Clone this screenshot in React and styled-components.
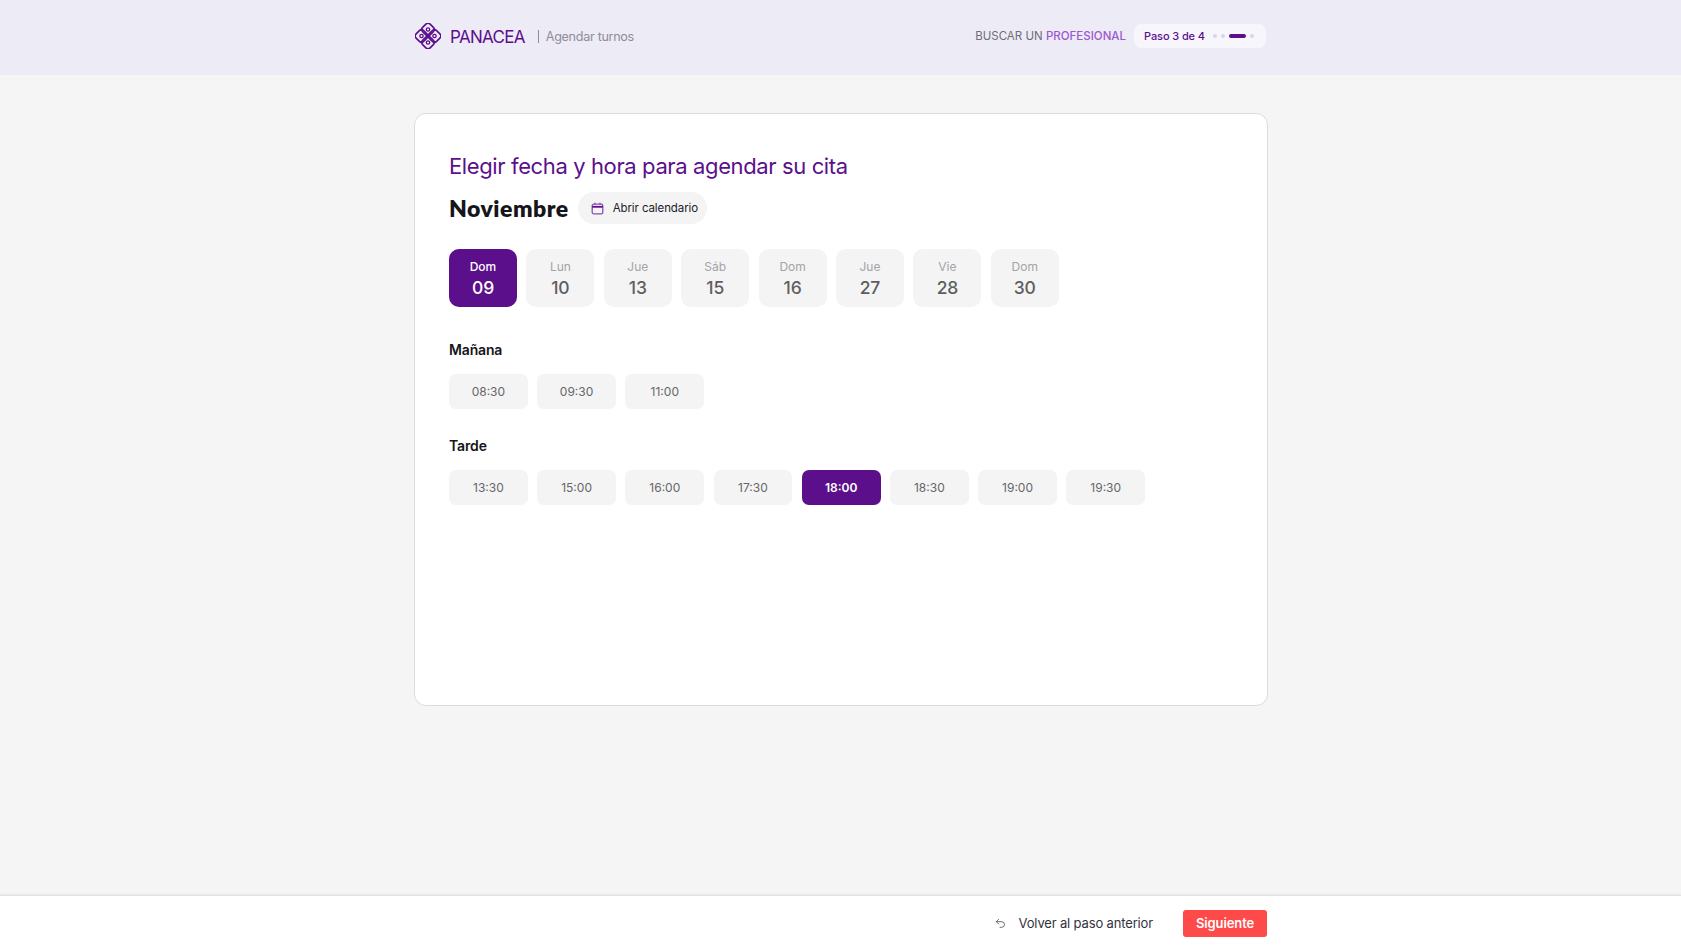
import React from "react";
import styled, { createGlobalStyle } from "styled-components";

const GlobalStyle = createGlobalStyle`
  html, body { margin: 0; padding: 0; }
  body { font-family: Inter, "Liberation Sans", sans-serif; background: #f5f5f5; }
  * { box-sizing: border-box; }
`;

const PURPLE = "#5c0f8b";

const Page = styled.div`
  display: flex;
  flex-direction: column;
  height: 949px;
  overflow: hidden;
`;

const Header = styled.header`
  height: 75px;
  background: #edebf6;
  display: flex;
  justify-content: center;
  flex-shrink: 0;
`;

const HeaderInner = styled.div`
  width: 853px;
  padding: 0 1px 3px;
  display: flex;
  align-items: center;
  justify-content: space-between;
`;

const Brand = styled.div`
  display: flex;
  align-items: center;
`;

const LogoText = styled.span`
  margin-left: 9px;
  padding-top: 1px;
  font-size: 17px;
  letter-spacing: -0.7px;
  color: ${PURPLE};
`;

const Section = styled.span`
  margin-left: 13px;
  margin-top: 1px;
  padding-left: 7px;
  font-size: 12.6px;
  line-height: 13px;
  letter-spacing: -0.3px;
  color: #8f8d99;
  border-left: 1px solid #8f8d99;
`;

const HeaderRight = styled.div`
  display: flex;
  align-items: center;
  gap: 8px;
`;

const SearchLabel = styled.span`
  font-size: 11.5px;
  letter-spacing: 0;
  color: #6f6d78;
  b { font-weight: 500; color: #9b59d0; }
`;

const StepPill = styled.div`
  width: 132px;
  height: 24px;
  padding-left: 10px;
  display: flex;
  align-items: center;
  background: #f7f6fd;
  border-radius: 8px;
  font-size: 11px;
  font-weight: 500;
  letter-spacing: -0.1px;
  color: ${PURPLE};
`;

const Steps = styled.div`
  margin-left: 8px;
  display: flex;
  align-items: center;
  gap: 4px;
`;

const Step = styled.i`
  display: block;
  width: ${(p) => (p.$active ? "17px" : "4px")};
  height: 4px;
  border-radius: 2px;
  background: ${(p) => (p.$active ? PURPLE : "#d8d6de")};
`;

const Main = styled.main`
  flex: 1;
  display: flex;
  justify-content: center;
  padding-top: 38px;
`;

const Card = styled.section`
  width: 854px;
  height: 593px;
  padding: 39px 34px 39px 34.5px;
  background: #fff;
  border: 1px solid #dcdcdc;
  border-radius: 12px;
`;

const Title = styled.h1`
  margin: 0;
  font-size: 22px;
  line-height: 27px;
  font-weight: 400;
  letter-spacing: -0.38px;
  color: ${PURPLE};
`;

const MonthRow = styled.div`
  margin-top: 12px;
  display: flex;
  align-items: center;
  gap: 9px;
`;

const Month = styled.h2`
  margin: 0;
  font-family: Lato, sans-serif;
  font-size: 23px;
  font-weight: 800;
  letter-spacing: 0.5px;
  color: #15151a;
`;

const CalendarButton = styled.button`
  height: 32px;
  width: 129px;
  padding: 0 0 0 13px;
  display: flex;
  align-items: center;
  gap: 9px;
  border: 0;
  border-radius: 16px;
  background: #f4f4f4;
  font-family: inherit;
  font-size: 11.5px;
  letter-spacing: -0.1px;
  color: #22222a;
`;

const Dates = styled.div`
  margin-top: 25px;
  display: flex;
  gap: 9.4px;
`;

const DateCell = styled.button`
  width: 68px;
  height: 58px;
  padding: 1px 0 0;
  display: flex;
  flex-direction: column;
  align-items: center;
  justify-content: center;
  gap: 3px;
  border: 0;
  border-radius: 10px;
  font-family: inherit;
  background: ${(p) => (p.$active ? PURPLE : "#f4f4f4")};
`;

const DayName = styled.span`
  font-size: 12px;
  line-height: 15px;
  font-weight: ${(p) => (p.$active ? 500 : 400)};
  color: ${(p) => (p.$active ? "#fff" : "#a4a3a8")};
`;

const DayNumber = styled.span`
  font-size: 17.5px;
  line-height: 21px;
  font-weight: 500;
  letter-spacing: -0.2px;
  color: ${(p) => (p.$active ? "#fff" : "#5e5e62")};
`;

const SlotTitle = styled.h3`
  margin: ${(p) => (p.$first ? "34px" : "28px")} 0 0;
  font-size: 14px;
  line-height: 17px;
  font-weight: 600;
  letter-spacing: -0.15px;
  color: #15151a;
`;

const Slots = styled.div`
  margin-top: 16px;
  display: flex;
  gap: 9.4px;
`;

const Slot = styled.button`
  width: 78.8px;
  height: 35px;
  padding: 0;
  border: 0;
  border-radius: 7px;
  font-family: inherit;
  font-size: 12px;
  font-weight: ${(p) => (p.$active ? 600 : 400)};
  background: ${(p) => (p.$active ? PURPLE : "#f4f4f4")};
  color: ${(p) => (p.$active ? "#fff" : "#66666a")};
`;

const Footer = styled.footer`
  height: 54px;
  padding-top: 1px;
  flex-shrink: 0;
  display: flex;
  justify-content: center;
  background: #fff;
  border-top: 1px solid #e2e2e2;
  box-shadow: 0 -1px 2px rgba(0, 0, 0, 0.06);
`;

const FooterInner = styled.div`
  width: 853px;
  display: flex;
  align-items: center;
  justify-content: flex-end;
  gap: 30px;
`;

const BackButton = styled.button`
  padding: 0;
  display: flex;
  align-items: center;
  gap: 13px;
  border: 0;
  background: none;
  font-family: inherit;
  font-size: 13px;
  letter-spacing: -0.15px;
  color: #33333b;
`;

const NextButton = styled.button`
  width: 84px;
  height: 27px;
  padding: 0;
  border: 0;
  border-radius: 3px;
  background: #ff4a4a;
  color: #fff;
  font-family: inherit;
  font-size: 13px;
  font-weight: 600;
  letter-spacing: -0.1px;
`;

function Logo() {
  return (
    <svg width="26" height="26" viewBox="0 0 26 26" fill="none" stroke={PURPLE} strokeWidth="1.6" strokeLinejoin="round">
      <rect x="7.7" y="1.2" width="10.6" height="10.6" rx="3" transform="rotate(45 13 6.5)" />
      <rect x="7.7" y="14.2" width="10.6" height="10.6" rx="3" transform="rotate(45 13 19.5)" />
      <rect x="1.2" y="7.7" width="10.6" height="10.6" rx="3" transform="rotate(45 6.5 13)" />
      <rect x="14.2" y="7.7" width="10.6" height="10.6" rx="3" transform="rotate(45 19.5 13)" />
      <circle cx="13" cy="6.5" r="1.7" strokeWidth="1.3" />
      <circle cx="13" cy="19.5" r="1.7" strokeWidth="1.3" />
      <circle cx="6.5" cy="13" r="1.7" strokeWidth="1.3" />
      <circle cx="19.5" cy="13" r="1.7" strokeWidth="1.3" />
    </svg>
  );
}

function CalendarIcon() {
  return (
    <svg width="13" height="13" viewBox="0 0 13 13" fill="none" stroke="#8a4fb0" strokeWidth="1.3">
      <rect x="1.2" y="2.2" width="10.6" height="9.6" rx="1.6" />
      <path d="M1.2 4.8h10.6" stroke={PURPLE} strokeWidth="1.8" />
      <path d="M4 .8v2M9 .8v2" />
    </svg>
  );
}

function BackIcon() {
  return (
    <svg width="11" height="11" viewBox="0 0 11 11" fill="none" stroke="#6a6a70" strokeWidth="1" strokeLinecap="round" strokeLinejoin="round">
      <path d="M3.6 1.4 1.3 3.7l2.3 2.3" />
      <path d="M1.3 3.7h5.4a2.8 2.8 0 0 1 0 5.6H5" />
    </svg>
  );
}

const dates = [
  ["Dom", "09"],
  ["Lun", "10"],
  ["Jue", "13"],
  ["Sáb", "15"],
  ["Dom", "16"],
  ["Jue", "27"],
  ["Vie", "28"],
  ["Dom", "30"],
];

const morning = ["08:30", "09:30", "11:00"];
const afternoon = ["13:30", "15:00", "16:00", "17:30", "18:00", "18:30", "19:00", "19:30"];

export default function App() {
  return (
    <Page>
      <GlobalStyle />
      <Header>
        <HeaderInner>
          <Brand>
            <Logo />
            <LogoText>PANACEA</LogoText>
            <Section>Agendar turnos</Section>
          </Brand>
          <HeaderRight>
            <SearchLabel>
              BUSCAR UN <b>PROFESIONAL</b>
            </SearchLabel>
            <StepPill>
              Paso 3 de 4
              <Steps>
                <Step />
                <Step />
                <Step $active />
                <Step />
              </Steps>
            </StepPill>
          </HeaderRight>
        </HeaderInner>
      </Header>

      <Main>
        <Card>
          <Title>Elegir fecha y hora para agendar su cita</Title>
          <MonthRow>
            <Month>Noviembre</Month>
            <CalendarButton>
              <CalendarIcon />
              Abrir calendario
            </CalendarButton>
          </MonthRow>
          <Dates>
            {dates.map(([day, num], i) => (
              <DateCell key={num} $active={i === 0}>
                <DayName $active={i === 0}>{day}</DayName>
                <DayNumber $active={i === 0}>{num}</DayNumber>
              </DateCell>
            ))}
          </Dates>
          <SlotTitle $first>Mañana</SlotTitle>
          <Slots>
            {morning.map((t) => (
              <Slot key={t}>{t}</Slot>
            ))}
          </Slots>
          <SlotTitle>Tarde</SlotTitle>
          <Slots>
            {afternoon.map((t) => (
              <Slot key={t} $active={t === "18:00"}>
                {t}
              </Slot>
            ))}
          </Slots>
        </Card>
      </Main>

      <Footer>
        <FooterInner>
          <BackButton>
            <BackIcon />
            Volver al paso anterior
          </BackButton>
          <NextButton>Siguiente</NextButton>
        </FooterInner>
      </Footer>
    </Page>
  );
}
